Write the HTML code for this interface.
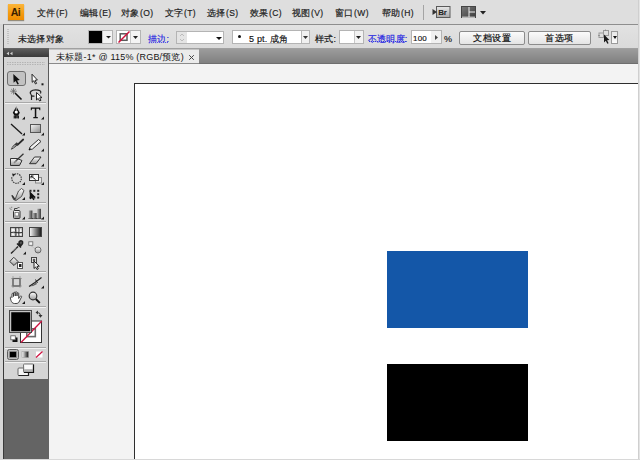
<!DOCTYPE html>
<html><head><meta charset="utf-8">
<style>
*{margin:0;padding:0;box-sizing:border-box}
html,body{width:640px;height:460px;overflow:hidden}
body{position:relative;background:#dedede;font-family:"Liberation Sans",sans-serif;font-size:10px;color:#222}
.a{position:absolute}
#menubar{left:0;top:0;width:640px;height:25px;background:#dedede}
#ctrl{left:3px;top:24px;width:635px;height:25px;background:linear-gradient(#e2e2e2,#dadada);border-top:1px solid #8e8e8e;border-left:1px solid #5a5a5a;border-bottom:1px solid #a0a0a0}
#tabbar{left:49px;top:49px;width:589px;height:15px;background:linear-gradient(#9c9c9c,#808080);border-bottom:1px solid #6e6e6e}
#tools{left:3px;top:48px;width:46px;height:411px;background:#646464;border-left:1px solid #3c3c3c}
#thead{left:0;top:1px;width:45px;height:8px;background:linear-gradient(#5a5a5a,#3e3e3e)}
#tbody{left:0;top:9px;width:45px;height:322px;background:#d8d8d8;border-right:1px solid #5a5a5a}
#canvas{left:49px;top:64px;width:589px;height:395px;background:#f3f3f3}
#artboard{left:85px;top:19px;width:520px;height:400px;background:#fff;border:1px solid #2e2e2e}
.menu{top:8px;letter-spacing:.45px;font-size:8.5px;-webkit-text-stroke:.2px #1e1e1e;color:#1e1e1e;font-weight:500;white-space:nowrap;line-height:10px}
.ct{font-size:9px;line-height:10px;color:#111;font-weight:500;-webkit-text-stroke:.15px #111;white-space:nowrap;letter-spacing:.2px}
.lk{color:#2424e0;-webkit-text-stroke:.15px #2424e0;}
.box{background:#fff;border:1px solid #b4b4b4}
.btn{border:1px solid #8c8c8c;border-radius:2px;background:linear-gradient(#fbfbfb,#e4e4e4);font-size:9px;line-height:12px;text-align:center;color:#111;letter-spacing:.5px;font-weight:500;-webkit-text-stroke:.2px #111}
</style></head><body>
<div id="menubar" class="a"></div>
<div class="a" style="left:8px;top:4px;width:16px;height:16px;background:linear-gradient(#fbb53a,#f39a10 60%,#f08c00);box-shadow:0 1px 1px rgba(60,40,0,.45);font:bold 10.5px 'Liberation Sans',sans-serif;letter-spacing:-.6px;color:#3a1e00;text-align:center;line-height:16px;text-indent:-1px">Ai</div>
<div class="a menu" style="left:37px">文件(F)</div>
<div class="a menu" style="left:80px">编辑(E)</div>
<div class="a menu" style="left:121px">对象(O)</div>
<div class="a menu" style="left:165px">文字(T)</div>
<div class="a menu" style="left:207px">选择(S)</div>
<div class="a menu" style="left:250px">效果(C)</div>
<div class="a menu" style="left:292px">视图(V)</div>
<div class="a menu" style="left:335px">窗口(W)</div>
<div class="a menu" style="left:382px">帮助(H)</div>


<div class="a" style="left:423px;top:5px;width:1px;height:15px;background:#a4a4a4"></div>
<svg class="a" style="left:432px;top:6px" width="19" height="12" viewBox="0 0 19 12">
 <defs><linearGradient id="gbr" x1="0" y1="0" x2="0" y2="1"><stop offset="0" stop-color="#e8e8e8"/><stop offset="1" stop-color="#a8a8a8"/></linearGradient></defs>
 <rect x="4.5" y="0.5" width="13.5" height="11" fill="url(#gbr)" stroke="#5a5a5a"/>
 <path d="M0.5 3 L5 6 L0.5 9Z" fill="#333"/>
 <text x="6.3" y="9.2" font-family="Liberation Sans" font-weight="bold" font-size="8" fill="#222" letter-spacing="-.3">Br</text>
</svg>
<svg class="a" style="left:461px;top:6px" width="15" height="12" viewBox="0 0 15 12">
 <defs><linearGradient id="gly" x1="0" y1="0" x2="1" y2="1"><stop offset="0" stop-color="#7a7a7a"/><stop offset="1" stop-color="#3c3c3c"/></linearGradient></defs>
 <rect x="0.5" y="0.5" width="14" height="11" fill="url(#gly)" stroke="#444"/>
 <path d="M8 1V11 M8 6H14 M1 11.2H14" stroke="#f0f0f0" stroke-width="1"/>
</svg>
<svg class="a" style="left:480px;top:11px" width="6" height="4"><path d="M0 0H6L3 3.5Z" fill="#222"/></svg>

<div id="ctrl" class="a"></div>
<div class="a" style="left:7px;top:29px;width:2px;height:16px;background:repeating-linear-gradient(#c2c2c2 0 1px,transparent 1px 2px)"></div>
<div class="a ct" style="left:18px;top:34px">未选择对象</div>
<div class="a box" style="left:88px;top:30px;width:25px;height:14px;background:#f4f4f4"></div>
<div class="a" style="left:89px;top:31px;width:13px;height:12px;background:#000"></div>
<div class="a" style="left:102px;top:31px;width:1px;height:12px;background:#c8c8c8"></div>
<svg class="a" style="left:105.5px;top:35.5px" width="5" height="3"><path d="M0 0H5L2.5 2.5Z" fill="#222"/></svg>
<div class="a box" style="left:116px;top:30px;width:25px;height:14px"></div>
<svg class="a" style="left:117px;top:31px" width="13" height="12" viewBox="0 0 13 12">
 <rect x="3.2" y="2.8" width="6.8" height="6.5" fill="#fff" stroke="#5a5a5a" stroke-width="1.5"/>
 <path d="M1.5 11.5 L12.5 0.5" stroke="#d0103a" stroke-width="1.5"/>
</svg>
<div class="a" style="left:130px;top:31px;width:1px;height:12px;background:#c8c8c8"></div><div class="a" style="left:131px;top:31px;width:9px;height:12px;background:#f4f4f4"></div>
<svg class="a" style="left:133px;top:36px" width="5" height="3"><path d="M0 0H5L2.5 3Z" fill="#222"/></svg>
<div class="a ct lk" style="left:148px;top:34px">描边:</div>
<div class="a" style="left:149px;top:42px;width:19px;height:1px;background:repeating-linear-gradient(90deg,#5a5ae0 0 1px,#b8b8e8 1px 2px)"></div>
<div class="a box" style="left:176px;top:31px;width:48px;height:13px"></div>
<div class="a" style="left:177px;top:32px;width:10px;height:11px;background:#e4e4e4"></div>
<svg class="a" style="left:179px;top:33px" width="6" height="9"><path d="M1 3L3 1L5 3M1 6L3 8L5 6" fill="none" stroke="#bbb"/></svg>
<svg class="a" style="left:216px;top:37px" width="6" height="3"><path d="M0 0H6L3 3Z" fill="#111"/></svg>
<div class="a box" style="left:232px;top:30px;width:78px;height:14px"></div>
<div class="a" style="left:238px;top:35px;width:3px;height:3px;border-radius:50%;background:#111"></div>
<div class="a ct" style="left:249px;top:34px">5 pt. 成角</div>
<div class="a" style="left:301px;top:31px;width:1px;height:12px;background:#b8b8b8"></div>
<div class="a" style="left:302px;top:31px;width:7px;height:12px;background:#f0f0f0"></div>
<svg class="a" style="left:303px;top:36px" width="5" height="3"><path d="M0 0H5L2.5 3Z" fill="#333"/></svg>
<div class="a ct" style="left:315px;top:34px">样式:</div>
<div class="a box" style="left:339px;top:30px;width:25px;height:14px"></div>
<div class="a" style="left:354px;top:31px;width:1px;height:12px;background:#c8c8c8"></div>
<div class="a" style="left:355px;top:31px;width:8px;height:12px;background:#f2f2f2"></div>
<svg class="a" style="left:356px;top:36px" width="5" height="3"><path d="M0 0H5L2.5 3Z" fill="#222"/></svg>
<div class="a ct lk" style="left:368px;top:34px">不透明度:</div>
<div class="a" style="left:369px;top:41px;width:37px;height:1px;background:repeating-linear-gradient(90deg,#3a3ae0 0 1px,#9a9ae8 1px 2px)"></div>
<div class="a box" style="left:411px;top:30px;width:31px;height:14px"></div>
<div class="a" style="left:431px;top:31px;width:10px;height:12px;background:#f0f0f0"></div>
<div class="a ct" style="left:413px;top:34px;font-size:8px">100</div>
<svg class="a" style="left:435px;top:35px" width="3" height="5"><path d="M0 0V5L3 2.5Z" fill="#444"/></svg>
<div class="a ct" style="left:444px;top:34px">%</div>
<div class="a btn" style="left:459px;top:31px;width:66px;height:14px">文档设置</div>
<div class="a btn" style="left:528px;top:31px;width:63px;height:14px">首选项</div>
<svg class="a" style="left:597px;top:29px" width="14" height="16" viewBox="0 0 14 16">
 <rect x="2" y="4" width="4.5" height="4.5" fill="none" stroke="#999" stroke-width="1"/>
 <rect x="6.5" y="1.5" width="5" height="5" fill="none" stroke="#999" stroke-width="1"/>
 <path d="M1 6.5H3M8.5 0.5V2" stroke="#888" stroke-width=".8"/>
 <path d="M7 5.5V13.5L8.8 11.8L10.3 14.8L11.6 14.2L10.1 11.2L12.4 11Z" fill="#1a1a1a"/>
</svg>
<div class="a" style="left:611px;top:31px;width:7px;height:13px;border:1px solid #9a9a9a;background:linear-gradient(#e8e8e8,#fafafa)"></div>
<svg class="a" style="left:612.5px;top:36px" width="4" height="3"><path d="M0 0H4L2 3Z" fill="#111"/></svg>

<div id="tabbar" class="a"></div>
<div id="canvas" class="a" style="overflow:hidden"><div id="artboard" class="a"></div>
<div class="a" style="left:338px;top:187px;width:141px;height:77px;background:#1457a8"></div>
<div class="a" style="left:338px;top:300px;width:141px;height:77px;background:#000"></div></div>

<div class="a" style="left:49px;top:49px;width:150px;height:15px;background:#ebebeb;border-top:1px solid #c4c4c4;border-bottom:1px solid #8a8a8a"></div>
<div class="a" style="left:56px;top:52px;font-size:9px;letter-spacing:.2px;color:#151515;font-weight:500;white-space:nowrap;line-height:10px">未标题-1* @ 115% (RGB/预览)</div>
<svg class="a" style="left:188px;top:54px" width="7" height="7"><path d="M1.2 1.2L5.8 5.8M5.8 1.2L1.2 5.8" stroke="#444" stroke-width="1"/></svg>

<svg class="a" style="left:0;top:0" width="50" height="460" viewBox="0 0 50 460">
 <defs>
  <linearGradient id="gh" x1="0" y1="0" x2="0" y2="1"><stop offset="0" stop-color="#5c5c5c"/><stop offset="1" stop-color="#3a3a3a"/></linearGradient>
  <linearGradient id="gw" x1="0" y1="0" x2="0" y2="1"><stop offset="0" stop-color="#ffffff"/><stop offset="1" stop-color="#9a9a9a"/></linearGradient>
  <linearGradient id="gg" x1="0" y1="0" x2="1" y2="0"><stop offset="0" stop-color="#ffffff"/><stop offset="1" stop-color="#111"/></linearGradient>
  <linearGradient id="gl" x1="0" y1="0" x2="1" y2="1"><stop offset="0" stop-color="#f8f8f8"/><stop offset="1" stop-color="#8c8c8c"/></linearGradient>
 </defs>
 <rect x="0" y="24" width="3" height="436" fill="#d6d6d6"/>
 <rect x="3" y="48" width="46" height="411" fill="#646464"/>
 <rect x="3" y="48" width="1" height="411" fill="#3a3a3a"/>
 <rect x="4" y="49" width="45" height="8" fill="url(#gh)"/>
 <path d="M6.5 53.5L9 51.8V55.2Z M10 53.5L12.5 51.8V55.2Z" fill="#d0d0d0"/>
 <rect x="4" y="57" width="44" height="322" fill="#d5d5d5"/>
 <rect x="48" y="57" width="1" height="322" fill="#5a5a5a"/>
 <path d="M7 62.5H45 M7 64.5H45" stroke="#b4b4b4" stroke-width="1" stroke-dasharray="1.5 1"/>
 <!-- separators -->
 <g stroke-width="1">
  <path d="M5 102.5H46 M5 168.5H46 M5 202.5H46 M5 221.5H46 M5 271.5H46 M5 306.5H46 M5 347.5H46 M5 361.5H46" stroke="#a9a9a9"/>
  <path d="M5 103.5H46 M5 169.5H46 M5 203.5H46 M5 222.5H46 M5 272.5H46 M5 307.5H46 M5 348.5H46 M5 362.5H46" stroke="#f2f2f2"/>
 </g>
 <!-- corner triangles -->
 <g fill="#1a1a1a">
  <rect x="41.5" y="83.3" width="2" height="2"/>
  <path d="M25 116.5V119.5H22Z M44 116.5V119.5H41Z"/>
  <path d="M25 132.5V135.5H22Z M44 132.5V135.5H41Z"/>
  <path d="M44 148.5V151.5H41Z"/>
  <path d="M44 163.5V166.5H41Z"/>
  <path d="M25 182V185H22Z M44 182V185H41Z"/>
  <path d="M25 197V200H22Z"/>
  <path d="M25 216.5V219.5H22Z M44 216.5V219.5H41Z"/>
  <path d="M26 251.5V254.5H23Z"/>
  <path d="M44 285.5V288.5H41Z"/>
  <path d="M25 301V304H22Z"/>
 </g>
 <!-- row1 selection (selected) -->
 <rect x="7.5" y="71.5" width="18" height="14" rx="2.5" fill="#c2c2c2" stroke="#6e6e6e"/>
 <path d="M13.3 74L13.6 82.8L15.6 81L17.5 84.6L18.9 83.9L17.1 80.4L19.8 80.1Z" fill="#111"/>
 <path d="M32 74.2L32.2 82.3L33.8 80.8L35.5 84L36.6 83.4L35 80.3L37.4 80Z" fill="#fff" stroke="#111" stroke-width=".9"/>
 <!-- wand -->
 <path d="M13.5 88V94.5M10.2 91.2H16.8M11.2 89L15.8 93.4M15.8 89L11.2 93.4" stroke="#666" stroke-width=".8"/>
 <path d="M15 93L21.5 99.5" stroke="#111" stroke-width="1.6"/>
 <!-- lasso -->
 <path d="M31 94.5C29 92 31.5 89.8 35.5 89.8C39.5 89.8 41.8 91.2 40.5 93.5" fill="none" stroke="#222" stroke-width="1.2"/>
 <path d="M31 94.5C31.5 96 33 96.5 34.5 96 M31.5 95.5V100" fill="none" stroke="#222" stroke-width="1.2"/>
 <path d="M36.5 92.5V100L38.2 98.4L39.6 101L41 100.3L39.7 97.8L42 97.6Z" fill="#fff" stroke="#111" stroke-width=".9"/>
 <!-- pen -->
 <path d="M16.3 106.5L19.8 112.8L18 115.8H14.6L12.8 112.8Z" fill="#111"/>
 <circle cx="16.3" cy="112" r="1.6" fill="#fff"/>
 <path d="M16.3 107V110.5" stroke="#fff" stroke-width=".6"/>
 <path d="M14.2 115.5V118.5M15.6 115.5V118.5M17 115.5V118.5M18.4 115.5V118.5" stroke="#111" stroke-width="1"/>
 <path d="M14 117H18.6" stroke="#111" stroke-width="1"/>
 <!-- type -->
 <path d="M30.8 107.5H40.3V110.3H39.5L39 108.8H36.3V117H37.8V118.2H33.3V117H34.8V108.8H32.1L31.6 110.3H30.8Z" fill="#111"/>
 <!-- line -->
 <path d="M11 124L22 134" stroke="#1a1a1a" stroke-width="1.3"/>
 <!-- rect -->
 <rect x="30.5" y="124.5" width="10" height="8" fill="url(#gl)" stroke="#555"/>
 <!-- paintbrush -->
 <path d="M23.2 139.5L17.5 144.8" stroke="#2a2a2a" stroke-width="1.8" stroke-linecap="round"/>
 <path d="M18.5 144L16 146.5C14.5 148 12.5 149.5 10.8 149.8C11.2 148.2 12.5 146 14.3 144.5L16.8 142.3Z" fill="#3a3a3a"/>
 <path d="M15.5 145L12.5 148" stroke="#e6e6e6" stroke-width=".9"/>
 <!-- pencil -->
 <path d="M29 150L30 147L38.5 139.5L41 141.5L32.5 149Z" fill="#f2f2f2" stroke="#333" stroke-width="1"/>
 <path d="M29 150L30.5 148.5" stroke="#111" stroke-width="1"/>
 <!-- blob brush -->
 <path d="M10.5 158.5H17L22 160.5L19.5 165.5H10.5Z" fill="url(#gw)" stroke="#333" stroke-width="1"/>
 <path d="M23.5 153.8L15.8 161" stroke="#333" stroke-width="1.3"/>
 <path d="M16.5 160.5L14 162.8" stroke="#888" stroke-width="1.6"/>
 <!-- eraser -->
 <path d="M29.5 163.7L34.5 157H41L36 163.7Z" fill="url(#gw)" stroke="#333" stroke-width="1"/>
 <!-- rotate -->
 <path d="M14.5 174.2A4.8 4.8 0 1 1 12.2 176.5" fill="none" stroke="#333" stroke-width="1.1" stroke-dasharray="1.5 .9"/>
 <path d="M12 173.5L15.5 174.3L13 176.8Z" fill="#222"/>
 <!-- scale -->
 <rect x="35.5" y="177.5" width="6" height="5.5" fill="#e6e6e6" stroke="#888"/>
 <rect x="29.5" y="174.5" width="9" height="6" fill="#fafafa" stroke="#333"/>
 <path d="M31 176L35.5 179.5M31 176H33.5M31 176V178.3" stroke="#111" stroke-width="1"/>
 <!-- width tool -->
 <path d="M12 195.5L15 199.5L18.5 191L21.5 188.5L24 190.5L21.5 196.5L16 200.5L13.5 199.5Z" fill="url(#gw)" stroke="#444" stroke-width=".9"/>
 <path d="M12 195.5L15 199.5" stroke="#333" stroke-width="1.3"/>
 <!-- free transform -->
 <g fill="#222"><rect x="29.5" y="189.8" width="2" height="2"/><rect x="33.3" y="189.8" width="2" height="2"/><rect x="37.2" y="189.8" width="2" height="2"/><rect x="37.2" y="193.2" width="2" height="2"/><rect x="29.5" y="196.6" width="2" height="2"/><rect x="33.3" y="196.6" width="2" height="2"/><rect x="37.2" y="196.6" width="2" height="2"/></g>
 <path d="M29.5 191L35.5 197L33 197.3L34.5 199.6L33.3 200.2L31.9 197.9L30 199.5Z" fill="#111"/>
 <!-- symbol sprayer -->
 <rect x="13.5" y="210.5" width="6.5" height="8" rx="1" fill="url(#gw)" stroke="#333"/>
 <rect x="15" y="212.5" width="3.5" height="3.5" fill="#fff" stroke="#666" stroke-width=".7"/>
 <path d="M14.5 210.5V208.5H17.5" fill="none" stroke="#444" stroke-width="1"/>
 <path d="M9.5 208.2H10.5M11.2 207.3H12.2M10.5 209.4H11.5M17.5 207.5H19.5" stroke="#555" stroke-width=".8"/>
 <!-- column graph -->
 <path d="M28.5 218.5H41.5" stroke="#444" stroke-width="1"/>
 <defs><linearGradient id="gcol" x1="0" y1="0" x2="1" y2="0"><stop offset="0" stop-color="#b0b0b0"/><stop offset="1" stop-color="#3a3a3a"/></linearGradient></defs>
 <rect x="28.8" y="210.5" width="3.6" height="8" fill="url(#gcol)"/>
 <rect x="33" y="213" width="3.6" height="5.5" fill="url(#gcol)"/>
 <rect x="37.2" y="208.8" width="3.8" height="9.7" fill="url(#gcol)"/>
 <!-- mesh -->
 <rect x="10.5" y="227.5" width="12" height="9" fill="#bcbcbc" stroke="#444"/>
 <path d="M11.5 229C13 228.5 15 229 15 230.5C15 232 13 232 11.5 232Z M17 229C19 228.5 21.5 229 21.5 230.5V232H17.5Z M12 233.5C13.5 233 14.5 234 14.5 235.5H12Z M17 233.5H21.5V235.5H16.5Z" fill="#f6f6f6"/>
 <path d="M15.8 228C15 230 16.5 233 15.8 236 M18.8 228C19.5 231 18.3 233 19 236 M11 232.5C14 231.5 18 233.5 22 232.5" stroke="#222" stroke-width=".9" fill="none"/>
 <!-- gradient -->
 <rect x="29.5" y="227.5" width="12" height="9" fill="url(#gg)" stroke="#444"/>
 <!-- eyedropper -->
 <path d="M11 253.5L18 246.5" stroke="#222" stroke-width="1.4"/>
 <path d="M17 243.5L21 247.5M19.2 241.8C20.5 240.5 22.5 240.5 22.7 242.2C23 244 22 244.5 21 245.5L19 243.5Z" stroke="#222" stroke-width="1.5" fill="#555"/>
 <path d="M13 251.3L16.5 247.8" stroke="#ccc" stroke-width=".6"/>
 <!-- blend -->
 <rect x="28.8" y="241.8" width="4" height="3.5" fill="#f4f4f4" stroke="#666" stroke-width=".8"/>
 <path d="M31 245.5L36.5 250" stroke="#888" stroke-width=".7" stroke-dasharray="1 1"/>
 <circle cx="38" cy="250" r="3" fill="url(#gw)" stroke="#555" stroke-width=".8"/>
 <!-- live paint bucket -->
 <path d="M9.8 261.5L13.8 257.3L18 261.5L14 265.5Z" fill="url(#gw)" stroke="#333" stroke-width="1"/>
 <rect x="17.5" y="262.5" width="5" height="6" fill="#fff" stroke="#555"/>
 <rect x="19" y="264" width="2.5" height="3" fill="#222"/>
 <!-- live paint select -->
 <rect x="31.5" y="257.5" width="5" height="5" fill="#eee" stroke="#444"/>
 <rect x="32.8" y="258.8" width="2.4" height="2.4" fill="#555"/>
 <path d="M34 261V268.5L35.6 267L37 269.5L38.3 268.8L37 266.4L39.3 266.2Z" fill="#f2f2f2" stroke="#111" stroke-width=".9"/>
 <!-- artboard -->
 <rect x="13" y="278.5" width="7" height="7.5" fill="none" stroke="#333" stroke-width="1.1"/>
 <path d="M13 276V288M20 276V288M11 278.5H22M11 286H22" stroke="#888" stroke-width=".6"/>
 <!-- slice -->
 <path d="M29 286.5L35 282.5L41.5 277.5" stroke="#222" stroke-width="1.2" fill="none"/>
 <path d="M29 286.5C31 286 34.5 284.5 36 282.5L37 284L33 286Z" fill="#555"/>
 <path d="M35.5 279.5L37.5 283" stroke="#222" stroke-width="1"/>
 <!-- hand -->
 <path d="M12 297.5V294C12 293 13.5 293 13.5 294V296.5V293C13.5 292 15.2 292 15.2 293V296V292.5C15.2 291.5 17 291.5 17 292.5V296V293.5C17 292.5 18.7 292.5 18.7 293.5V298.5L20 296.5C20.7 295.5 22 296 21.5 297L19 302C18.5 303 17.5 303.5 16 303.5H14.5C12.5 303.5 11.5 302 11 300.5L10.3 298C10 297 11.5 296.5 12 297.5Z" fill="#fff" stroke="#333" stroke-width=".9"/>
 <!-- zoom -->
 <circle cx="33" cy="296" r="3.8" fill="url(#gw)" stroke="#333" stroke-width="1.2"/>
 <path d="M35.8 299L39.8 303" stroke="#111" stroke-width="1.8"/>
 <!-- fill / stroke -->
 <rect x="20.5" y="321" width="21" height="21.5" fill="#fff" stroke="#333"/>
 <rect x="26.8" y="328.8" width="8.5" height="7.8" fill="#fff" stroke="#6a6a6a" stroke-width="1.6"/>
 <path d="M21 342.5L41.8 321" stroke="#cf1140" stroke-width="1.3"/>
 <rect x="9.5" y="310.5" width="22" height="22" fill="#9a9a9a" stroke="#4a4a4a"/>
 <rect x="10.5" y="311.5" width="20" height="20" fill="none" stroke="#c4c4c4" stroke-width="1"/>
 <rect x="11.3" y="312.3" width="18.9" height="18.9" fill="#000"/>
 <path d="M37.5 312.5C39.5 312.5 40 313.5 40.5 315" fill="none" stroke="#444" stroke-width="1.1"/>
 <path d="M35.5 312.5L38 310.5V314.5Z M38.5 315H42.5L40.5 317.8Z" fill="#333"/>
 <rect x="12.5" y="337.5" width="5" height="4.5" fill="#111"/>
 <rect x="10.8" y="335.8" width="4.5" height="4" fill="#fff" stroke="#555" stroke-width=".8"/>
 <!-- color modes -->
 <rect x="7.5" y="349.5" width="11" height="10" rx="2" fill="#bdbdbd" stroke="#5e5e5e"/>
 <rect x="9.5" y="351.5" width="7" height="6" fill="#000" stroke="#999" stroke-width=".6"/>
 <rect x="22" y="351.5" width="6.5" height="6" fill="url(#gg)"/>
 <rect x="22" y="351.5" width="6.5" height="6" fill="none" stroke="#999" stroke-width=".5"/>
 <rect x="36" y="351.5" width="6.5" height="6" fill="#fff"/>
 <path d="M36 357.5L42.5 351.5" stroke="#cf1140" stroke-width="1.2"/>
 <!-- screen mode -->
 <rect x="18" y="368" width="10.5" height="7.5" rx="1" fill="#f6f6f6" stroke="#666" stroke-width="1"/>
 <path d="M18.5 375.5H28.5V371" fill="none" stroke="#222" stroke-width="1.2"/>
 <rect x="23.5" y="364" width="10" height="8.5" rx="1" fill="url(#gw)" stroke="#777" stroke-width="1"/>
 <rect x="24.5" y="365" width="8" height="4" fill="#fafafa"/>
 <path d="M24 372.5H33.5V364.5" fill="none" stroke="#111" stroke-width="1.2"/>
</svg>
<div class="a" style="left:638px;top:0;width:2px;height:460px;background:#e4e4e4;border-left:1px solid #cfcfcf"></div>
<div class="a" style="left:0;top:459px;width:640px;height:1px;background:#d8d8d8"></div>
</body></html>
